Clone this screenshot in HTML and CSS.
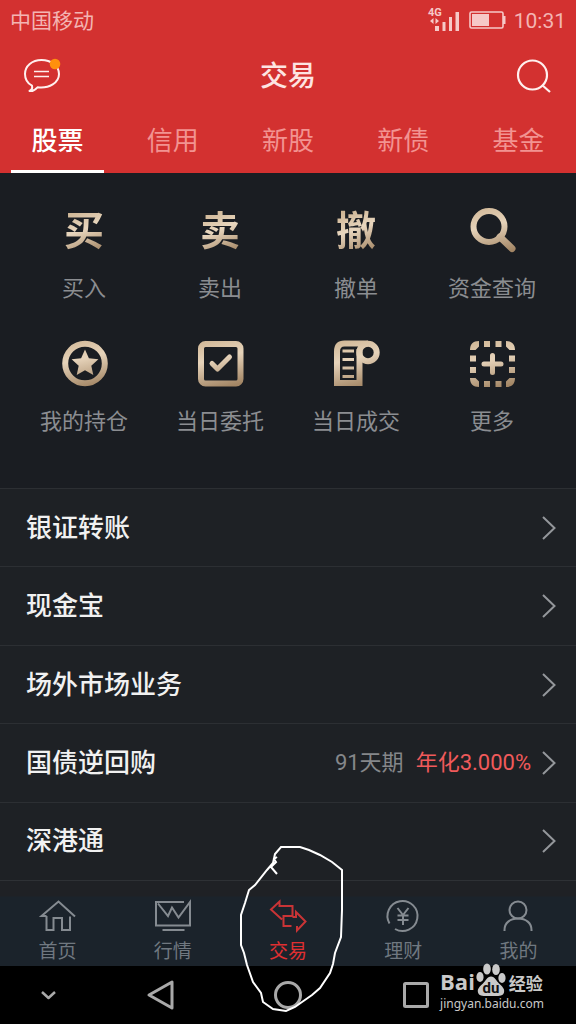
FILE: index.html
```html
<!DOCTYPE html>
<html lang="zh-CN">
<head>
<meta charset="utf-8">
<meta name="viewport" content="width=device-width, initial-scale=1">
<title>交易</title>
<link rel="stylesheet" href="styles.css">
</head>
<body>
<svg class="defs" width="0" height="0" aria-hidden="true">
  <defs>
    <linearGradient id="gold" gradientUnits="userSpaceOnUse" x1="10" y1="0" x2="22" y2="48">
      <stop offset="0" stop-color="#d2b999"/>
      <stop offset=".4" stop-color="#e6d3ba"/>
      <stop offset="1" stop-color="#a38665"/>
    </linearGradient>
  </defs>
</svg>
<div class="page">
  <header class="header">
    <div class="status">
      <span class="carrier">中国移动</span>
      <div class="status-right">
        <svg width="32" height="26" viewBox="0 0 32 26" fill="#f6c9c8">
          <text class="net" x="1" y="8">4G</text>
          <path d="M3 13l3.500-3v6zM12 13l-3.500-3v6z"/>
          <rect x="8" y="18" width="4" height="5"/><rect x="15.500" y="14" width="3" height="9"/><rect x="22" y="9" width="3" height="14"/><rect x="28.500" y="4" width="3.500" height="19"/>
        </svg>
        <svg width="37" height="18" viewBox="0 0 37 18">
          <rect x="2" y="0" width="33" height="16" rx="1.500" fill="none" stroke="#f6c9c8" stroke-width="1.600"/>
          <rect x="4" y="2" width="17" height="12" fill="#f6c9c8"/><rect x="35" y="4" width="2.500" height="8" fill="#f6c9c8"/>
        </svg>
        <time class="clock">10:31</time>
      </div>
    </div>
    <div class="titlebar">
      <button class="icon-btn" aria-label="消息">
        <svg width="38" height="36" viewBox="0 0 38 36" fill="none" stroke="#fff0ee" stroke-width="2">
          <path d="M19.500 1C10 1 3 7 3 15c0 5 2.800 9.500 7 11.700.6 2.300-.6 4.300-2.500 5.300 3.500.6 6-1.400 8-3.700C27.500 29.800 37 23.500 37 15 37 7 29 1 19.500 1z" stroke-linejoin="round"/>
          <path d="M12 12.500h15M12 17.500h15" stroke-width="1.600"/>
          <circle cx="33" cy="5" r="5.300" fill="#ff900d" stroke="none"/>
        </svg>
      </button>
      <h1 class="title">交易</h1>
      <button class="icon-btn" aria-label="搜索">
        <svg width="38" height="36" viewBox="0 0 38 36" fill="none" stroke="#fff0ee" stroke-width="2.200">
          <circle cx="16.500" cy="16" r="14.500"/><path d="M26 26l8 7"/>
        </svg>
      </button>
    </div>
    <nav class="tabs">
      <button class="tab active">股票</button>
      <button class="tab">信用</button>
      <button class="tab">新股</button>
      <button class="tab">新债</button>
      <button class="tab">基金</button>
    </nav>
  </header>

  <main class="main">
    <section class="grid">
      <button class="item"><span class="glyph">买</span><span class="label">买入</span></button>
      <button class="item"><span class="glyph">卖</span><span class="label">卖出</span></button>
      <button class="item"><span class="glyph">撤</span><span class="label">撤单</span></button>
      <button class="item">
        <svg width="48" height="48" viewBox="0 0 48 48" fill="none" stroke="url(#gold)">
          <circle cx="21" cy="18.500" r="15.500" stroke-width="6"/><path d="M32 29l12 11.500" stroke-width="7" stroke-linecap="round"/>
        </svg>
        <span class="label">资金查询</span>
      </button>
      <button class="item">
        <svg width="48" height="48" viewBox="0 0 48 48">
          <circle cx="25" cy="22.500" r="19.800" fill="none" stroke="url(#gold)" stroke-width="6"/>
          <path fill="url(#gold)" d="M25 8.500l3.900 8.800 9.500 1-7.100 6.400 2 9.400-8.300-4.800-8.300 4.800 2-9.400-7.100-6.400 9.500-1z"/>
        </svg>
        <span class="label">我的持仓</span>
      </button>
      <button class="item">
        <svg width="48" height="48" viewBox="0 0 48 48" fill="none" stroke="url(#gold)" stroke-width="6">
          <rect x="5" y="3" width="39.500" height="39.500" rx="4.500"/>
          <path d="M16 22.500l5.500 5.500L33.500 16" stroke-width="5" stroke-linecap="round" stroke-linejoin="round"/>
        </svg>
        <span class="label">当日委托</span>
      </button>
      <button class="item">
        <svg width="48" height="48" viewBox="0 0 48 48" fill="none" stroke="url(#gold)" stroke-width="6">
          <path d="M36 2.500H12.500Q5 2.500 5 10.500V42H27.500V8"/>
          <circle cx="36" cy="11.500" r="8.700"/>
          <path d="M10.500 10H22M10.500 18.500H22M10.500 27H22M10.500 35.500H22" stroke-width="3"/>
        </svg>
        <span class="label">当日成交</span>
      </button>
      <button class="item">
        <svg width="48" height="48" viewBox="0 -1 48 48" fill="url(#gold)">
          <path d="M2 8C2 2 5-1 11-1V4.500L7.500 8zM38-1c6 0 9 3 9 9H41.500L38 4.500zM2 36c0 6 3 9 9 9V39.500L7.500 36zM47 36c0 6-3 9-9 9V39.500L41.500 36z"/>
          <path d="M16-1h6v6h-6zM27.500-1h6v6h-6zM16 39h6v6h-6zM27.500 39h6v6h-6zM2 13.500h6v6H2zM2 25h6v6H2zM41 13.500h6v6h-6zM41 25h6v6h-6z"/>
          <path d="M24.500 13.500v17M16 22h17" stroke="url(#gold)" stroke-width="5" stroke-linecap="round"/>
        </svg>
        <span class="label">更多</span>
      </button>
    </section>

    <section class="list">
      <a class="row" href="#"><span class="name">银证转账</span><svg class="chev" width="14" height="24" viewBox="0 0 14 24"><path d="M1 1l11.500 11L1 23"/></svg></a>
      <a class="row" href="#"><span class="name">现金宝</span><svg class="chev" width="14" height="24" viewBox="0 0 14 24"><path d="M1 1l11.500 11L1 23"/></svg></a>
      <a class="row" href="#"><span class="name">场外市场业务</span><svg class="chev" width="14" height="24" viewBox="0 0 14 24"><path d="M1 1l11.500 11L1 23"/></svg></a>
      <a class="row" href="#"><span class="name">国债逆回购</span><span class="term">91天期</span><span class="rate">年化3.000%</span><svg class="chev" width="14" height="24" viewBox="0 0 14 24"><path d="M1 1l11.500 11L1 23"/></svg></a>
      <a class="row" href="#"><span class="name">深港通</span><svg class="chev" width="14" height="24" viewBox="0 0 14 24"><path d="M1 1l11.500 11L1 23"/></svg></a>
    </section>
  </main>

  <footer class="footer">
    <nav class="tabbar">
      <a class="nav" href="#">
        <svg width="40" height="36" viewBox="0 0 40 36"><path d="M8.500 18H3.500L20.500 3.500 37 18.500M8.500 18v14h7V20h8.500v12h8V18.500"/></svg>
        <span>首页</span>
      </a>
      <a class="nav" href="#">
        <svg width="40" height="36" viewBox="0 0 40 36"><path d="M31 4H3v23.500h34V4l-11.500 15.500-6.500-10-4 8.500L5 5.500M9.500 32h22"/></svg>
        <span>行情</span>
      </a>
      <a class="nav current" href="#">
        <svg width="40" height="36" viewBox="0 0 40 36"><path d="M14 21.500L3 11.500 11.500 3.500V8H24.500V18H15.500V28H23.500M24.500 19H28V14L37.500 23.500 29 32.500V28"/></svg>
        <span>交易</span>
      </a>
      <a class="nav" href="#">
        <svg width="40" height="36" viewBox="0 0 40 36"><path d="M6.500 25.500A15 15 0 1 1 12 31M14.500 10l5.500 7 5.500-7M20 17v10M14.500 17.500h11M14.500 22h11"/></svg>
        <span>理财</span>
      </a>
      <a class="nav" href="#">
        <svg width="40" height="36" viewBox="0 0 40 36"><circle cx="20" cy="12" r="8.500"/><path d="M6.500 33v-1C6.500 25 12 20.500 20 20.500s13.500 4.500 13.500 11.500v1"/></svg>
        <span>我的</span>
      </a>
    </nav>
    <div class="system">
      <button class="sys" aria-label="收起"><svg width="40" height="32" viewBox="0 0 40 32"><path d="M4 13l6.500 6 6.500-6" stroke-width="2.500"/></svg></button>
      <button class="sys" aria-label="返回"><svg width="40" height="32" viewBox="0 0 40 32"><path d="M19 3v26L-4 16z"/></svg></button>
      <button class="sys" aria-label="主屏幕"><svg width="40" height="32" viewBox="0 0 40 32"><circle cx="20" cy="16" r="12.500"/></svg></button>
      <button class="sys" aria-label="最近任务"><svg width="40" height="32" viewBox="0 0 40 32"><rect x="21.500" y="4.500" width="23" height="23" rx="1"/></svg></button>
      <span class="sys"></span>
    </div>
    <svg class="scribble" width="108" height="172" viewBox="0 0 108 172">
      <path d="M39 28L33 21 38 16 36 13 39 11M35 17L37 8 43 1H62L71 4 82 9 94 16 104 24V64L103 91 97 107 95 118 92 127 82 142 74 149 64 156 57 161 48 165 35 163 25 156 23 147 15 136 9 119 6 107 3 99V69L7 57 11 44 17 39 29 24z"/>
    </svg>
    <div class="mark">
      <div class="mark-top">
        <span class="mark-bai">Bai</span>
        <svg width="30" height="34" viewBox="0 0 30 34">
          <ellipse cx="4" cy="14" rx="3.600" ry="5"/><ellipse cx="11" cy="6" rx="3.800" ry="5.500"/><ellipse cx="20" cy="6.500" rx="3.800" ry="5.500"/><ellipse cx="26" cy="15" rx="3.600" ry="5"/>
          <path d="M15 13.500c4 0 5 4 8 7s6 5 5 9-6 3.500-13 3.500-12 .5-13-3.500 2-6 5-9 4-7 8-7z"/>
          <text class="mark-du" x="15" y="30">du</text>
        </svg>
        <span class="mark-cn">经验</span>
      </div>
      <div class="mark-url">jingyan.baidu.com</div>
    </div>
  </footer>
</div>
</body>
</html>
```

FILE: styles.css
```css
* { box-sizing: border-box; }
body {
  margin: 0;
  background: #1c1f24;
  font-family: Roboto, "Noto Sans CJK SC", sans-serif;
}
button {
  margin: 0;
  padding: 0;
  border: 0;
  background: none;
  font: inherit;
  color: inherit;
}
a { color: inherit; text-decoration: none; }
svg { display: block; flex: none; overflow: visible; }
.defs { position: absolute; }
.page {
  display: flex;
  flex-direction: column;
  min-height: 100vh;
}

.header { background: #d33130; }
.status {
  display: flex;
  align-items: center;
  justify-content: space-between;
  height: 42px;
  padding: 0 10px;
  color: #f3b5b3;
}
.carrier { font-size: 21px; line-height: 40px; }
.status-right { display: flex; align-items: center; gap: 9px; }
.net { font-size: 11px; font-weight: 700; }
.clock { font-size: 21px; line-height: 40px; }
.titlebar {
  display: flex;
  align-items: center;
  justify-content: space-between;
  height: 70px;
  padding: 0 22px;
}
.title {
  margin: 0;
  font-size: 28px;
  font-weight: 500;
  line-height: 40px;
  color: #fde4e2;
}
.tabs { display: flex; height: 61px; }
.tab {
  flex: 1;
  margin: 0 11px;
  border-bottom: 3px solid transparent;
  font-size: 26px;
  line-height: 58px;
  color: #f29391;
}
.tab.active { border-color: #fff; color: #fff; font-weight: 500; }

.main { display: flex; flex-direction: column; flex: 1; }
.grid {
  display: grid;
  grid-template-columns: repeat(4, 1fr);
  row-gap: 39px;
  padding: 35px 16px 53px;
  background: #1a1d22;
}
.item {
  display: flex;
  flex-direction: column;
  align-items: center;
  gap: 20px;
}
.glyph {
  height: 48px;
  font-size: 40px;
  font-weight: 700;
  line-height: 48px;
  color: transparent;
  background: linear-gradient(160deg, #cdb494 10%, #e8d6be 45%, #a38665 90%);
  -webkit-background-clip: text;
  background-clip: text;
}
.label { font-size: 22px; line-height: 26px; color: #8b8d91; white-space: nowrap; }

.list { display: flex; flex-direction: column; flex: 1; background: #1e2125; }
.row {
  display: flex;
  flex: 1;
  align-items: center;
  padding: 0 20px 0 26px;
  border-top: 1px solid #2c2f33;
}
.name { flex: 1; font-size: 26px; font-weight: 500; line-height: 40px; color: #f1f1f1; }
.term { margin-right: 12px; font-size: 22px; line-height: 40px; color: #85878a; }
.rate { margin-right: 11px; font-size: 22px; line-height: 40px; color: #f05a5b; }
.chev { fill: none; stroke: #94979b; stroke-width: 2; }

.footer { position: relative; }
.tabbar {
  display: flex;
  padding: 17px 0 1px;
  border-top: 1px solid #2e3135;
  background: linear-gradient(#1f2125 15px, #1b232b 16px);
}
.nav {
  display: flex;
  flex: 1;
  flex-direction: column;
  align-items: center;
  gap: 5px;
  font-size: 19px;
  line-height: 26px;
  color: #707880;
}
.nav svg { fill: none; stroke: #858b91; stroke-width: 2; }
.nav.current { color: #e02f31; }
.nav.current svg { stroke: #c93436; }
.system { display: flex; height: 58px; background: #000; }
.sys { display: flex; flex: 1; align-items: center; justify-content: center; }
.sys svg { fill: none; stroke: #a9a9a9; stroke-width: 3; stroke-linejoin: round; }

.scribble {
  position: absolute;
  left: calc(50% - 50px);
  bottom: 6px;
  fill: none;
  stroke: #fff;
  stroke-width: 2;
}
.mark {
  position: absolute;
  right: 32px;
  bottom: 13px;
  color: #c9c9c9;
}
.mark svg { fill: #c9c9c9; }
.mark-top { display: flex; align-items: flex-end; gap: 1px; height: 34px; }
.mark-bai { font-family: "Open Sans", sans-serif; font-size: 22px; font-weight: 700; line-height: 32px; }
.mark-du { font-size: 15px; font-weight: 700; text-anchor: middle; fill: #111; }
.mark-cn { margin-left: 2px; font-size: 17px; font-weight: 700; line-height: 26px; }
.mark-url { font-family: "Noto Sans", sans-serif; font-size: 12px; line-height: 14px; }
```
